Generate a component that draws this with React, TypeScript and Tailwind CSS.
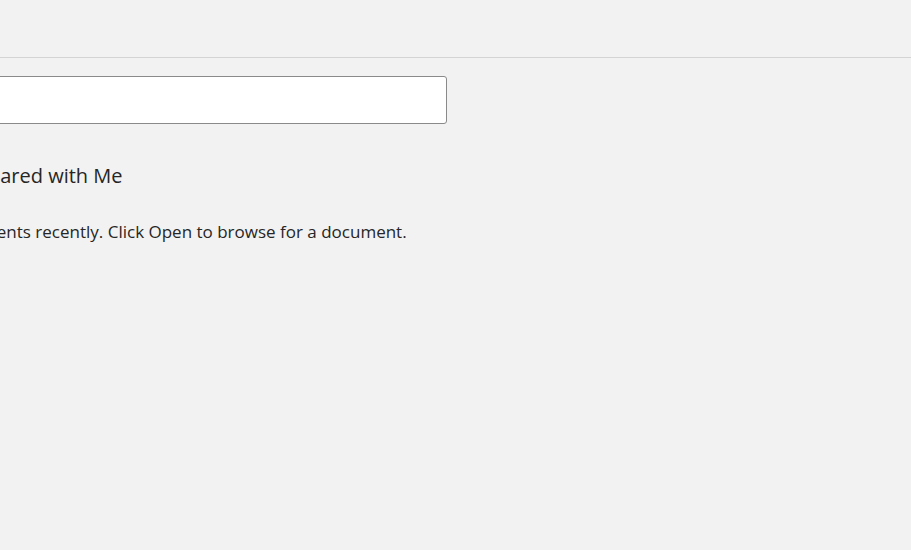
import React from 'react';

const App = () => {
    return (
        <div className="w-[911px] h-[550px] overflow-hidden bg-[#f2f2f2] text-[#262626]" style={{ fontFamily: '"Open Sans", "Noto Sans", sans-serif' }}>
            {/* Top strip */}
            <div className="h-[58px] border-b border-[#d4d4d4]"></div>

            {/* Content, clipped on the left */}
            <div className="flex flex-col pt-[18px]">
                <div className="-ml-[300px] w-[747px] h-[48px] bg-white border border-[#8a8a8a] rounded-[3px]"></div>

                <h2 className="-ml-[23px] mt-[37px] text-[20px] leading-[30px] font-normal whitespace-nowrap">
                    Shared with Me
                </h2>

                <p className="-ml-[253px] mt-[29px] text-[17px] leading-[24px] whitespace-nowrap">
                    You haven't opened any documents recently. Click Open to browse for a document.
                </p>
            </div>
        </div>
    );
};

export default App;
